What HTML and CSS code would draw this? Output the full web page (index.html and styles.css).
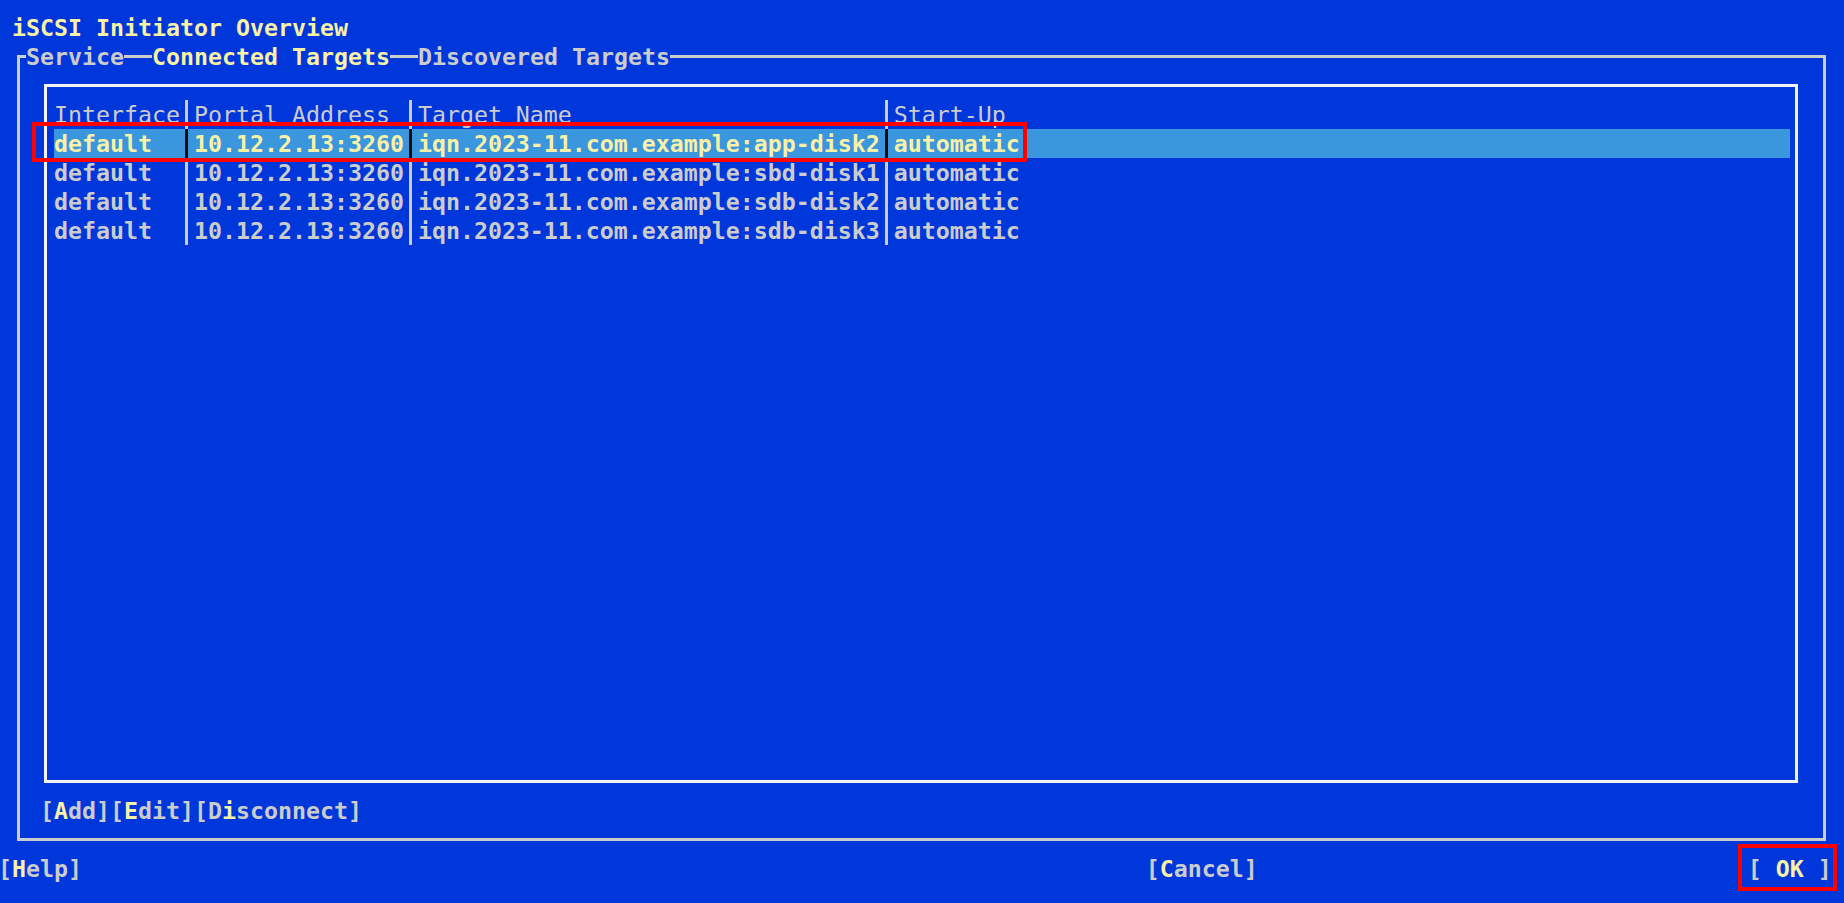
FILE: index.html
```html
<!DOCTYPE html>
<html lang="en">
<head>
<meta charset="utf-8">
<title>iSCSI Initiator Overview</title>
<link rel="stylesheet" href="styles.css">
</head>
<body>
<div class="screen">
  <div class="title">iSCSI Initiator Overview</div>
  <fieldset class="dialog">
    <legend class="tabs-legend"><div class="tabs"><span class="tab">Service</span><span class="tab-line"></span><span class="tab active">Connected Targets</span><span class="tab-line"></span><span class="tab">Discovered Targets</span></div></legend>
    <div class="table-box">
      <div class="row head">
        <span class="cell">Interface</span><span class="sep"></span><span class="cell">Portal Address</span><span class="sep"></span><span class="cell">Target Name</span><span class="sep"></span><span class="cell">Start-Up</span>
      </div>
      <div class="row selected">
        <span class="cell">default</span><span class="sep"></span><span class="cell">10.12.2.13:3260</span><span class="sep"></span><span class="cell">iqn.2023-11.com.example:app-disk2</span><span class="sep"></span><span class="cell">automatic</span>
      </div>
      <div class="row">
        <span class="cell">default</span><span class="sep"></span><span class="cell">10.12.2.13:3260</span><span class="sep"></span><span class="cell">iqn.2023-11.com.example:sbd-disk1</span><span class="sep"></span><span class="cell">automatic</span>
      </div>
      <div class="row">
        <span class="cell">default</span><span class="sep"></span><span class="cell">10.12.2.13:3260</span><span class="sep"></span><span class="cell">iqn.2023-11.com.example:sdb-disk2</span><span class="sep"></span><span class="cell">automatic</span>
      </div>
      <div class="row">
        <span class="cell">default</span><span class="sep"></span><span class="cell">10.12.2.13:3260</span><span class="sep"></span><span class="cell">iqn.2023-11.com.example:sdb-disk3</span><span class="sep"></span><span class="cell">automatic</span>
      </div>
    </div>
    <div class="actions"><span class="btn">[<span class="hot">A</span>dd]</span><span class="btn">[<span class="hot">E</span>dit]</span><span class="btn">[D<span class="hot">i</span>sconnect]</span></div>
  </fieldset>
  <div class="footer">
    <span class="btn help">[<span class="hot">H</span>elp]</span>
    <span class="btn cancel">[<span class="hot">C</span>ancel]</span>
    <span class="btn ok">[ <span class="hot">OK</span> ]</span>
  </div>
</div>
</body>
</html>
```

FILE: styles.css
```css
html, body {
  margin: 0;
  height: 100%;
}

body {
  background: #0037da;
  color: #cccccc;
  font-family: "DejaVu Sans Mono", "Liberation Mono", monospace;
  font-size: 23.254px;
  line-height: 29px;
  overflow: hidden;
}

.screen {
  padding-top: 13px;
}

.title {
  height: 29px;
  padding-left: 12px;
  font-weight: bold;
  color: #f9f1a5;
  white-space: pre;
}

.dialog {
  margin: 0 0 0 17px;
  width: 1809px;
  box-sizing: border-box;
  border: 3px solid #cccccc;
  padding: 0 0 13px 6px;
  min-inline-size: 0;
}

.tabs-legend {
  padding: 0;
  margin: 0;
}

.tabs {
  display: flex;
  align-items: center;
  height: 29px;
  font-weight: bold;
  white-space: pre;
}

.tab-line {
  width: 2ch;
  height: 3px;
  background: #cccccc;
}

.tab.active {
  color: #f9f1a5;
}

.table-box {
  margin: 13px 0 0 18px;
  width: 1754px;
  height: 699px;
  box-sizing: border-box;
  border: 3px solid #f2f2f2;
  padding: 13px 5px 13px 7px;
}

.row {
  display: grid;
  grid-template-columns: 9ch 1ch 15ch 1ch 33ch 1ch 1fr;
  height: 29px;
  font-weight: bold;
  white-space: pre;
}

.row.head {
  font-weight: normal;
}

.row.selected {
  position: relative;
  background: #3a96dd;
  color: #f9f1a5;
}

.row.selected::after {
  content: "";
  position: absolute;
  left: -22px;
  top: -7px;
  width: 995px;
  height: 40px;
  box-sizing: border-box;
  border: 4px solid #ff0000;
}

.sep {
  display: flex;
  justify-content: center;
}

.sep::before {
  content: "";
  width: 3px;
  background: #cccccc;
}

.row.selected .sep::before {
  background: #0c0c0c;
}

.actions {
  margin-top: 13px;
  padding-left: 14px;
  height: 29px;
  font-weight: bold;
  white-space: pre;
}

.footer {
  margin-top: 13px;
  margin-left: -2px;
  display: grid;
  grid-template-columns: 82ch 43ch 6ch;
  height: 29px;
  font-weight: bold;
  white-space: pre;
}

.hot {
  color: #f9f1a5;
}

.ok {
  position: relative;
}

.ok::after {
  content: "";
  position: absolute;
  left: -10px;
  top: -10px;
  width: 99px;
  height: 47px;
  box-sizing: border-box;
  border: 4px solid #ff0000;
}
```
